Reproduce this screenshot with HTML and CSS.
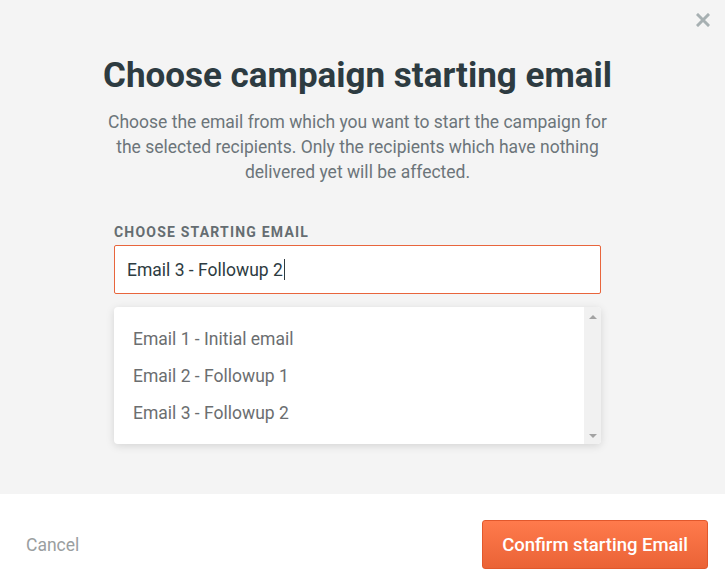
FILE: index.html
```html
<!DOCTYPE html>
<html lang="en">
<head>
  <meta charset="UTF-8">
  <title>Choose campaign starting email</title>
  <link rel="stylesheet" href="styles.css">
</head>
<body>

  <!-- MODAL BODY -->
  <div class="modal-body">
    <button class="close" aria-label="Close">
      <svg width="14" height="14" viewBox="0 0 14 14">
        <path d="M2 2 L12 12 M12 2 L2 12" stroke="#a7b0b2" stroke-width="3" stroke-linecap="square"/>
      </svg>
    </button>

    <div class="content">
      <h1>Choose campaign starting email</h1>
      <p class="intro">Choose the email from which you want to start the campaign for the selected recipients. Only the recipients which have nothing delivered yet will be affected.</p>

      <label class="field-label" for="startEmail">Choose starting email</label>
      <div class="input-box" id="startEmail">Email 3 - Followup 2<span class="caret"></span></div>

      <div class="dropdown">
        <ul class="options">
          <li>Email 1 - Initial email</li>
          <li>Email 2 - Followup 1</li>
          <li>Email 3 - Followup 2</li>
        </ul>
        <div class="scrollbar">
          <span class="arrow up"></span>
          <span class="arrow down"></span>
        </div>
      </div>
    </div>
  </div>

  <!-- FOOTER -->
  <div class="modal-footer">
    <a class="cancel" href="#">Cancel</a>
    <button class="confirm">Confirm starting Email</button>
  </div>

</body>
</html>
```

FILE: styles.css
```css
* {
  box-sizing: border-box;
}

body {
  margin: 0;
  font-family: Roboto, "Liberation Sans", Arial, sans-serif;
  background: #fff;
  color: #2d3b41;
}

/* MODAL BODY */
.modal-body {
  position: relative;
  height: 494px;
  background: #f4f4f4;
  padding-top: 54px;
}

.close {
  position: absolute;
  top: 13px;
  right: 15px;
  width: 14px;
  height: 14px;
  padding: 0;
  border: none;
  background: none;
  cursor: pointer;
}

.close svg {
  display: block;
}

.content {
  width: 487px;
  margin-left: 114px;
}

h1 {
  margin: 0 -24px;
  font-size: 35px;
  line-height: 44px;
  font-weight: 700;
  text-align: center;
  color: #2d3b41;
}

.intro {
  margin: 12px -14px 0;
  font-size: 17.5px;
  line-height: 25px;
  text-align: center;
  color: #6c757a;
}

.field-label {
  display: block;
  margin-top: 39px;
  font-size: 14px;
  font-weight: 700;
  letter-spacing: 1.2px;
  text-transform: uppercase;
  color: #656d71;
}

.input-box {
  height: 49px;
  margin-top: 5px;
  padding: 0 12px;
  display: flex;
  align-items: center;
  background: #fff;
  border: 1px solid #e8653c;
  border-radius: 2px;
  font-size: 17.5px;
  color: #2d3b41;
}

.caret {
  display: inline-block;
  width: 1px;
  height: 21px;
  margin-left: 1px;
  background: #2d3b41;
}

/* DROPDOWN */
.dropdown {
  display: flex;
  height: 137px;
  margin-top: 13px;
  background: #fff;
  border-radius: 4px;
  box-shadow: 0 2px 8px rgba(0, 0, 0, 0.13);
  overflow: hidden;
}

.options {
  flex: 1;
  list-style: none;
  margin: 0;
  padding: 14px 0 0 19px;
}

.options li {
  height: 37px;
  line-height: 37px;
  font-size: 17.5px;
  color: #6b6e70;
}

.scrollbar {
  width: 17px;
  background: #f1f1f1;
  display: flex;
  flex-direction: column;
  justify-content: space-between;
  align-items: center;
  padding: 8px 0 6px;
}

.arrow {
  width: 0;
  height: 0;
  border-left: 4px solid transparent;
  border-right: 4px solid transparent;
}

.arrow.up {
  border-bottom: 4px solid #a3a3a3;
}

.arrow.down {
  border-top: 4px solid #a3a3a3;
}

/* FOOTER */
.modal-footer {
  display: flex;
  justify-content: space-between;
  align-items: center;
  padding: 26px 17px 0 26px;
}

.cancel {
  font-size: 17.5px;
  color: #9a9ea0;
  text-decoration: none;
}

.confirm {
  height: 49px;
  padding: 0 19px;
  border: 1px solid #e2582c;
  border-radius: 3px;
  background: linear-gradient(#ff7a4c, #ea6336);
  color: #fff;
  font-family: inherit;
  font-size: 18.5px;
  font-weight: 500;
  cursor: pointer;
}
```
